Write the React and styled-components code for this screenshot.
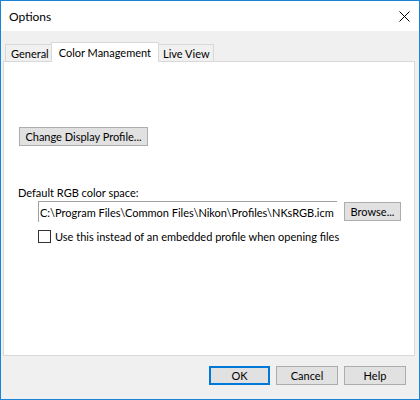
import React from "react";
import styled, { createGlobalStyle } from "styled-components";

const GlobalStyle = createGlobalStyle`
  body {
    margin: 0;
    background: #ffffff;
    font-family: Lato, "Noto Sans", sans-serif;
    font-size: 11px;
    color: #000000;
  }
`;

const Window = styled.div`
  width: 420px;
  height: 400px;
  box-sizing: border-box;
  border: 1px solid #1883d7;
  display: flex;
  flex-direction: column;
  background: #f0f0f0;
`;

const TitleBar = styled.div`
  height: 30px;
  background: #ffffff;
  display: flex;
  align-items: center;
  justify-content: space-between;
  padding: 0 9px 0 8px;
`;

const Title = styled.span`
  font-size: 12px;
`;

const Body = styled.div`
  flex: 1;
  display: flex;
  flex-direction: column;
  padding: 11px 4px 0 2px;
`;

const TabStrip = styled.div`
  display: flex;
  align-items: flex-end;
  height: 20px;
  padding-left: 2px;
`;

const Tab = styled.div`
  box-sizing: border-box;
  height: ${p => (p.$active ? "20px" : "18px")};
  padding: ${p => (p.$active ? "0 7px 1px 7px" : "0 3px 0 5px")};
  margin: 0 ${p => (p.$active ? "-2px" : "0")};
  border: 1px solid #d9d9d9;
  border-bottom: ${p => (p.$active ? "none" : "1px solid #d9d9d9")};
  background: ${p => (p.$active ? "#ffffff" : "#f0f0f0")};
  display: flex;
  align-items: center;
  position: relative;
  z-index: ${p => (p.$active ? 1 : 0)};
  white-space: nowrap;
`;

const Panel = styled.div`
  box-sizing: border-box;
  height: 295px;
  margin-top: -1px;
  border: 1px solid #d9d9d9;
  background: #ffffff;
  padding: 65px 0 0 14px;
  display: flex;
  flex-direction: column;
  align-items: flex-start;
`;

const Button = styled.button`
  box-sizing: border-box;
  height: 19px;
  padding: 0;
  font: inherit;
  color: #000000;
  background: #e1e1e1;
  border: ${p => (p.$default ? "2px solid #0078d7" : "1px solid #adadad")};
  width: ${p => (p.$w ? p.$w + "px" : "auto")};
  margin-left: ${p => (p.$indent ? p.$indent + "px" : "0")};
  display: flex;
  align-items: center;
  justify-content: center;
  white-space: nowrap;
`;

const Label = styled.div`
  margin: 40px 0 0 0;
  height: 14px;
  line-height: 14px;
`;

const FieldRow = styled.div`
  display: flex;
  align-items: center;
  margin: 1px 0 0 20px;
  gap: 7px;
`;

const PathInput = styled.div`
  box-sizing: border-box;
  width: 299px;
  height: 21px;
  border-top: 1px solid #a0a0a0;
  border-left: 1px solid #a0a0a0;
  padding-left: 1px;
  display: flex;
  align-items: center;
  white-space: nowrap;
  overflow: hidden;
`;

const CheckRow = styled.label`
  display: flex;
  align-items: center;
  margin: 8px 0 0 20px;
  gap: 4px;
  white-space: nowrap;
`;

const Box = styled.span`
  box-sizing: border-box;
  width: 13px;
  height: 13px;
  border: 1px solid #333333;
  background: #ffffff;
`;

const Footer = styled.div`
  display: flex;
  justify-content: flex-end;
  gap: 6px;
  padding: 10px 9px 0 0;
`;

function CloseIcon() {
  return (
    <svg width="11" height="11" viewBox="0 0 11 11">
      <path d="M0.5 0.5 L10.5 10.5 M10.5 0.5 L0.5 10.5" stroke="#000" strokeWidth="1" />
    </svg>
  );
}

export default function App() {
  return (
    <>
      <GlobalStyle />
      <Window>
        <TitleBar>
          <Title>Options</Title>
          <CloseIcon />
        </TitleBar>
        <Body>
          <TabStrip>
            <Tab>General</Tab>
            <Tab $active>Color Management</Tab>
            <Tab>Live View</Tab>
          </TabStrip>
          <Panel>
            <Button $w={129} $indent={1}>Change Display Profile...</Button>
            <Label>Default RGB color space:</Label>
            <FieldRow>
              <PathInput>C:\Program Files\Common Files\Nikon\Profiles\NKsRGB.icm</PathInput>
              <Button $w={57}>Browse...</Button>
            </FieldRow>
            <CheckRow>
              <Box />
              Use this instead of an embedded profile when opening files
            </CheckRow>
          </Panel>
          <Footer>
            <Button $default $w={61}>OK</Button>
            <Button $w={62}>Cancel</Button>
            <Button $w={62}>Help</Button>
          </Footer>
        </Body>
      </Window>
    </>
  );
}
